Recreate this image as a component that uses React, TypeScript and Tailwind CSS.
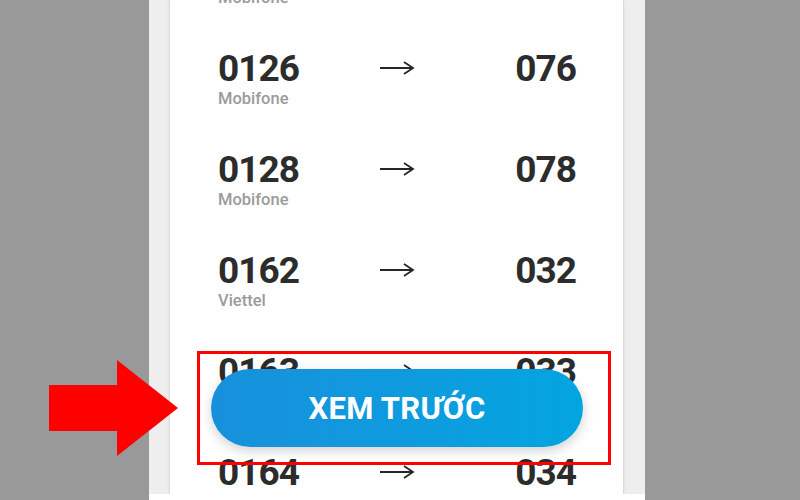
import React from "react";

const rows = [
  { from: "0122", to: "077", carrier: "Mobifone" },
  { from: "0126", to: "076", carrier: "Mobifone" },
  { from: "0128", to: "078", carrier: "Mobifone" },
  { from: "0162", to: "032", carrier: "Viettel" },
  { from: "0163", to: "033", carrier: "Viettel" },
  { from: "0164", to: "034", carrier: "Viettel" },
];

function Arrow() {
  return (
    <svg width="36" height="37" viewBox="0 0 36 37" className="block">
      <path d="M1 18 H34" stroke="#262626" strokeWidth="1.8" fill="none" />
      <path d="M25 12 L34 18 L25 24" stroke="#262626" strokeWidth="1.8" fill="none" strokeLinejoin="miter" />
    </svg>
  );
}

export default function App() {
  return (
    <div
      className="w-[800px] h-[500px] bg-[#999999] flex justify-center overflow-hidden relative"
      style={{ fontFamily: "Roboto, 'Liberation Sans', sans-serif" }}
    >
      <div className="w-[496px] h-[500px] ml-[-6px] flex flex-col bg-[#eeeeee]">
        <div className="flex-1 flex justify-center overflow-hidden px-[20px] pr-[21px]">
          <div className="flex-1 bg-white border-x border-[#dcdcdc] overflow-hidden shadow-[0_0_3px_rgba(0,0,0,0.08)]">
            <div className="-mt-[81px] pl-[48px] pr-[47px]">
              {rows.map((r) => (
                <div key={r.from} className="h-[101px] pt-[30px]">
                  <div className="grid grid-cols-3 items-start">
                    <span className="text-[37px] leading-[37px] font-bold tracking-[-1px] text-[#2c2c2c]">{r.from}</span>
                    <span className="justify-self-center">
                      <Arrow />
                    </span>
                    <span className="justify-self-end text-[37px] leading-[37px] font-bold tracking-[-1px] text-[#2c2c2c]">{r.to}</span>
                  </div>
                  <div className="mt-[3px] text-[16.5px] leading-[17px] font-medium text-[#9b9b9b]">{r.carrier}</div>
                </div>
              ))}
            </div>
          </div>
        </div>
        <div className="h-[6px] bg-white" />
      </div>

      <button className="absolute left-[211px] top-[369px] w-[372px] h-[78px] rounded-full bg-gradient-to-r from-[#1790dc] to-[#02a5e0] text-white text-[31px] font-bold tracking-[0.3px] shadow-[0_4px_12px_rgba(0,0,0,0.18)] flex items-center justify-center pt-[3px]">
        XEM TRƯỚC
      </button>

      <div className="absolute left-[197px] top-[351px] w-[414px] h-[114px] border-[3px] border-[#ff0000]" />

      <svg className="absolute left-[49px] top-[360px]" width="130" height="97" viewBox="0 0 130 97">
        <polygon points="0,25 68,25 68,0 129,48 68,96 68,71 0,71" fill="#ff0000" />
      </svg>
    </div>
  );
}
